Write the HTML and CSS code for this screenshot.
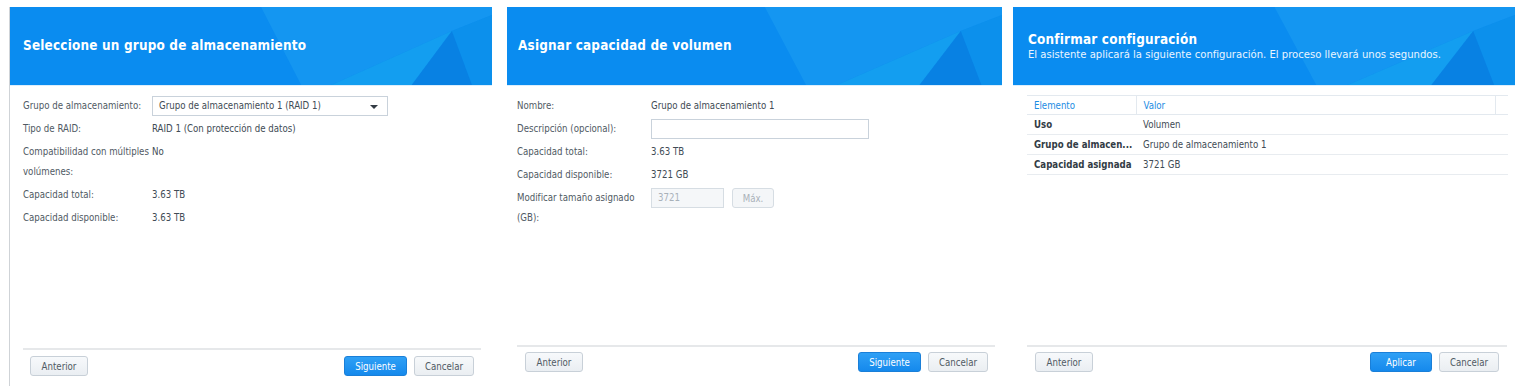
FILE: index.html
```html
<!DOCTYPE html>
<html lang="es">
<head>
  <meta charset="utf-8">
  <title>Asistente de creación de volumen</title>
  <link rel="stylesheet" href="styles.css">
</head>
<body>
  <div class="row">

    <section class="wizard wizard-first">
      <header class="wiz-head">
        <svg class="facets" viewBox="0 0 480 78" preserveAspectRatio="none" aria-hidden="true">
          <polygon points="250,0 480,0 480,8 440,24 320,78 290,78" fill="#22a6f3" opacity="0.4"/>
          <polygon points="440,24 480,8 480,78 460,78" fill="#0e92ea" opacity="0.6"/>
          <polygon points="320,78 440,24 400,78" fill="#1cb0f0" opacity="0.5"/>
          <polygon points="400,78 440,24 460,78" fill="#0673d2" opacity="0.45"/>
        </svg>
        <h2 class="wiz-title">Seleccione un grupo de almacenamiento</h2>
      </header>
      <div class="wiz-body form">
        <div class="form-row">
          <span class="lbl">Grupo de almacenamiento:</span>
          <div class="select">Grupo de almacenamiento 1 (RAID 1)<span class="caret"></span></div>
        </div>
        <div class="form-row">
          <span class="lbl">Tipo de RAID:</span>
          <span class="val">RAID 1 (Con protección de datos)</span>
        </div>
        <div class="form-row">
          <span class="lbl">Compatibilidad con múltiples volúmenes:</span>
          <span class="val">No</span>
        </div>
        <div class="form-row">
          <span class="lbl">Capacidad total:</span>
          <span class="val">3.63 TB</span>
        </div>
        <div class="form-row">
          <span class="lbl">Capacidad disponible:</span>
          <span class="val">3.63 TB</span>
        </div>
      </div>
      <footer class="wiz-foot">
        <button class="btn">Anterior</button>
        <span class="spacer"></span>
        <button class="btn btn-primary">Siguiente</button>
        <button class="btn">Cancelar</button>
      </footer>
    </section>

    <section class="wizard wizard-second">
      <header class="wiz-head">
        <svg class="facets" viewBox="0 0 480 78" preserveAspectRatio="none" aria-hidden="true">
          <polygon points="250,0 480,0 480,8 440,24 320,78 290,78" fill="#22a6f3" opacity="0.4"/>
          <polygon points="440,24 480,8 480,78 460,78" fill="#0e92ea" opacity="0.6"/>
          <polygon points="320,78 440,24 400,78" fill="#1cb0f0" opacity="0.5"/>
          <polygon points="400,78 440,24 460,78" fill="#0673d2" opacity="0.45"/>
        </svg>
        <h2 class="wiz-title">Asignar capacidad de volumen</h2>
      </header>
      <div class="wiz-body form form-wide">
        <div class="form-row">
          <span class="lbl">Nombre:</span>
          <span class="val">Grupo de almacenamiento 1</span>
        </div>
        <div class="form-row">
          <span class="lbl">Descripción (opcional):</span>
          <input class="text-input" type="text">
        </div>
        <div class="form-row">
          <span class="lbl">Capacidad total:</span>
          <span class="val">3.63 TB</span>
        </div>
        <div class="form-row">
          <span class="lbl">Capacidad disponible:</span>
          <span class="val">3721 GB</span>
        </div>
        <div class="form-row">
          <span class="lbl">Modificar tamaño asignado (GB):</span>
          <div class="inline">
            <input class="text-input size-input" type="text" value="3721" disabled>
            <button class="btn btn-small" disabled>Máx.</button>
          </div>
        </div>
      </div>
      <footer class="wiz-foot">
        <button class="btn">Anterior</button>
        <span class="spacer"></span>
        <button class="btn btn-primary">Siguiente</button>
        <button class="btn">Cancelar</button>
      </footer>
    </section>

    <section class="wizard wizard-third">
      <header class="wiz-head wiz-head-sub">
        <svg class="facets" viewBox="0 0 480 78" preserveAspectRatio="none" aria-hidden="true">
          <polygon points="250,0 480,0 480,8 440,24 320,78 290,78" fill="#22a6f3" opacity="0.4"/>
          <polygon points="440,24 480,8 480,78 460,78" fill="#0e92ea" opacity="0.6"/>
          <polygon points="320,78 440,24 400,78" fill="#1cb0f0" opacity="0.5"/>
          <polygon points="400,78 440,24 460,78" fill="#0673d2" opacity="0.45"/>
        </svg>
        <h2 class="wiz-title">Confirmar configuración</h2>
        <p class="wiz-sub">El asistente aplicará la siguiente configuración. El proceso llevará unos segundos.</p>
      </header>
      <div class="wiz-body summary">
        <table class="grid">
          <colgroup>
            <col class="col-key">
            <col>
            <col class="col-pad">
          </colgroup>
          <thead>
            <tr><th>Elemento</th><th>Valor</th><th></th></tr>
          </thead>
          <tbody>
            <tr><td class="key">Uso</td><td colspan="2">Volumen</td></tr>
            <tr><td class="key">Grupo de almacen...</td><td colspan="2">Grupo de almacenamiento 1</td></tr>
            <tr><td class="key">Capacidad asignada</td><td colspan="2">3721 GB</td></tr>
          </tbody>
        </table>
      </div>
      <footer class="wiz-foot">
        <button class="btn">Anterior</button>
        <span class="spacer"></span>
        <button class="btn btn-primary">Aplicar</button>
        <button class="btn">Cancelar</button>
      </footer>
    </section>

  </div>
</body>
</html>
```

FILE: styles.css
```css
body {
  margin: 0;
  background-color: #fff;
  font-family: "DejaVu Sans Condensed", "DejaVu Sans", sans-serif;
  font-stretch: condensed;
  font-size: 9.6px;
  color: #4b5560;
  overflow: hidden;
}

.row {
  display: flex;
  align-items: flex-start;
  padding-top: 7px;
}

.wizard {
  display: flex;
  flex-direction: column;
  height: 379px;
  background-color: #fff;
}

.wizard-first {
  width: 482px;
  margin-left: 9px;
  border-left: 1px solid #cfd3d7;
}

.wizard-second {
  width: 495px;
  margin-left: 15px;
}

.wizard-third {
  width: 502px;
  margin-left: 11px;
}

/* blue banner */
.wiz-head {
  position: relative;
  box-sizing: border-box;
  height: 79px;
  display: flex;
  flex-direction: column;
  justify-content: center;
  padding-left: 13px;
  background-color: #0a8cf0;
  border-bottom: 1px solid #dceefc;
  overflow: hidden;
}

.wizard-second .wiz-head {
  padding-left: 11px;
}

.wizard-third .wiz-head {
  justify-content: flex-start;
  padding-left: 15px;
  padding-top: 25px;
}

.facets {
  position: absolute;
  top: 0;
  left: 0;
  width: 100%;
  height: 100%;
}

.wiz-title {
  position: relative;
  margin: 0;
  color: #fff;
  font-size: 13.4px;
  line-height: 16px;
  font-weight: bold;
  letter-spacing: 0.2px;
}

.wiz-sub {
  position: relative;
  margin: 0;
  color: #eaf5ff;
  font-size: 11.2px;
  line-height: 14px;
}

.wiz-body {
  flex: 1;
}

/* form rows */
.form {
  padding: 10px 0 0 13px;
}

.form-wide {
  padding-left: 10px;
}

.form-row {
  display: flex;
  align-items: flex-start;
  margin-bottom: 3px;
  line-height: 20px;
}

.lbl {
  flex: 0 0 129px;
  color: #505a64;
}

.form-wide .lbl {
  flex-basis: 134px;
}

.val {
  color: #414b55;
}

.select {
  position: relative;
  box-sizing: border-box;
  width: 236px;
  height: 20px;
  padding-left: 6px;
  line-height: 18px;
  border: 1px solid #c9d2db;
  color: #414b55;
}

.caret {
  position: absolute;
  right: 9px;
  top: 8px;
  border-left: 4px solid transparent;
  border-right: 4px solid transparent;
  border-top: 4px solid #333b44;
}

.text-input {
  box-sizing: border-box;
  width: 218px;
  height: 20px;
  margin: 0;
  padding: 0 6px;
  border: 1px solid #c9d2db;
  border-radius: 0;
  font: inherit;
  color: #414b55;
  background-color: #fff;
}

.inline {
  display: flex;
  gap: 8px;
}

.size-input {
  width: 73px;
  background-color: #f5f7f9;
  color: #a9b1b9;
  border-color: #d6dde3;
}

/* summary table */
.summary {
  padding: 9px 7px 0 14px;
}

.grid {
  width: 100%;
  table-layout: fixed;
  border-collapse: collapse;
  color: #414b55;
}

.grid .col-key {
  width: 109px;
}

.grid .col-pad {
  width: 13px;
}

.grid th {
  height: 18px;
  padding: 0 7px;
  text-align: left;
  font-weight: normal;
  color: #1c8ce3;
  border-top: 1px solid #e3e9ef;
  border-bottom: 1px solid #e3e9ef;
}

.grid th + th {
  border-left: 1px solid #e3e9ef;
}

.grid td {
  height: 19px;
  padding: 0 7px;
  white-space: nowrap;
  overflow: hidden;
  border-bottom: 1px solid #e8ecf0;
}

.grid .key {
  font-weight: bold;
  color: #333c45;
}

/* footer buttons */
.wiz-foot {
  display: flex;
  gap: 7px;
  margin: 0 11px 0 13px;
  padding: 6px 7px 10px;
  border-top: 2px solid #e6e8ea;
}

.wizard-second .wiz-foot {
  margin: 0 7px 0 10px;
  padding: 5px 7px 14px 8px;
}

.wizard-third .wiz-foot {
  margin: 0 8px 0 14px;
  padding: 5px 8px 14px 8px;
}

.spacer {
  flex: 1;
}

.btn {
  box-sizing: border-box;
  min-width: 58px;
  height: 20px;
  padding: 0 10px;
  font: inherit;
  color: #505a64;
  background: linear-gradient(#f7f9fb, #eaeef2);
  border: 1px solid #c8d0d8;
  border-radius: 3px;
}

.btn-primary {
  min-width: 62px;
  color: #fff;
  background: linear-gradient(#2fa0f5, #1589ec);
  border-color: #1a7fd8;
}

.btn-small {
  min-width: 42px;
  padding: 0 8px;
}

.btn:disabled {
  color: #a9b1b9;
  background: #f4f6f8;
  border-color: #d6dde3;
}
```
